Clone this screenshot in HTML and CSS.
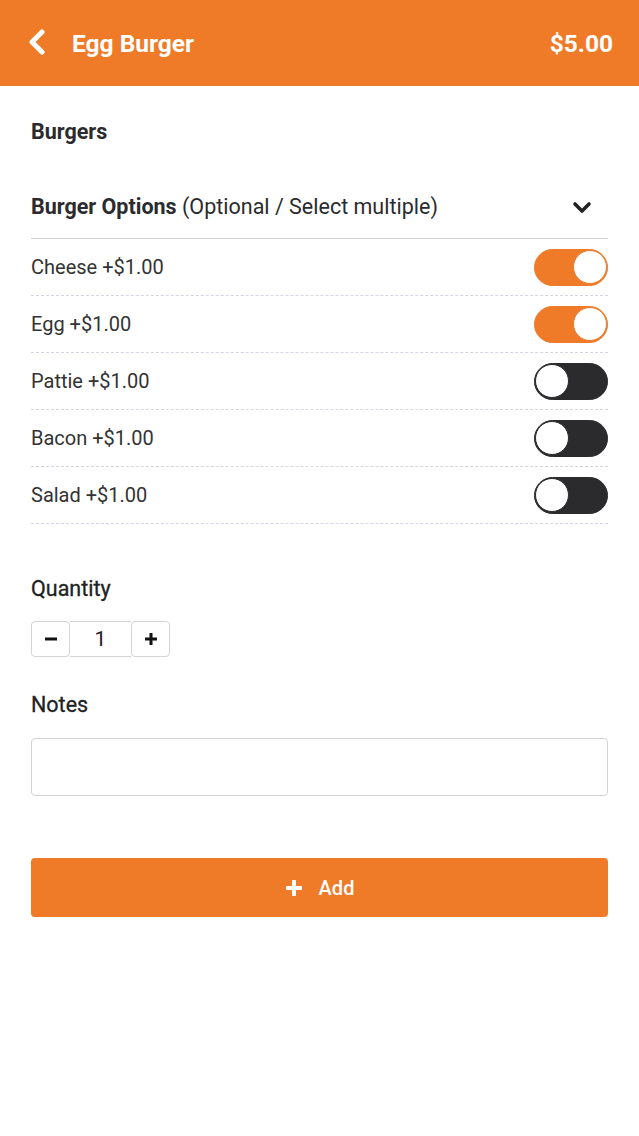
FILE: index.html
```html
<!DOCTYPE html>
<html>
<head>
<meta charset="utf-8">
<link rel="stylesheet" href="styles.css">
</head>
<body>
<header class="topbar">
  <div class="topbar-left">
    <svg class="back" width="20" height="26" viewBox="0 0 20 26"><path d="M16 3 L6 13 L16 23" fill="none" stroke="#fff" stroke-width="5" stroke-linecap="round" stroke-linejoin="round"/></svg>
    <span class="title">Egg Burger</span>
  </div>
  <span class="price">$5.00</span>
</header>
<main class="content">
  <h2 class="category">Burgers</h2>
  <div class="group-head">
    <span><b>Burger Options</b> (Optional / Select multiple)</span>
    <svg class="chev" width="20" height="14" viewBox="0 0 20 14"><path d="M3 3 L10 10 L17 3" fill="none" stroke="#222" stroke-width="3.6" stroke-linecap="round" stroke-linejoin="round"/></svg>
  </div>
  <ul class="options">
    <li class="opt"><span>Cheese +$1.00</span><span class="toggle on"><span class="knob"></span></span></li>
    <li class="opt"><span>Egg +$1.00</span><span class="toggle on"><span class="knob"></span></span></li>
    <li class="opt"><span>Pattie +$1.00</span><span class="toggle"><span class="knob"></span></span></li>
    <li class="opt"><span>Bacon +$1.00</span><span class="toggle"><span class="knob"></span></span></li>
    <li class="opt"><span>Salad +$1.00</span><span class="toggle"><span class="knob"></span></span></li>
  </ul>
  <h3 class="label qty-label">Quantity</h3>
  <div class="stepper">
    <span class="step-btn"><svg width="14" height="14" viewBox="0 0 14 14"><rect x="1" y="5.5" width="12" height="3" fill="#111"/></svg></span>
    <span class="step-val">1</span>
    <span class="step-btn"><svg width="14" height="14" viewBox="0 0 14 14"><rect x="1" y="5.5" width="12" height="3" fill="#111"/><rect x="5.5" y="1" width="3" height="12" fill="#111"/></svg></span>
  </div>
  <h3 class="label notes-label">Notes</h3>
  <div class="notes"></div>
  <button class="add"><svg width="18" height="18" viewBox="0 0 18 18"><rect x="1" y="7" width="16" height="4" rx="1" fill="#fff"/><rect x="7" y="1" width="4" height="16" rx="1" fill="#fff"/></svg><span>Add</span></button>
</main>
</body>
</html>
```

FILE: styles.css
```css
* { box-sizing: border-box; }
body {
  margin: 0;
  font-family: Roboto, "Noto Sans", sans-serif;
  background: #fff;
  color: #2b2b2b;
}
.topbar {
  height: 86px;
  background: #ef7b29;
  display: flex;
  align-items: center;
  justify-content: space-between;
  padding: 0 26px 0 26px;
  color: #fff;
}
.topbar-left { display: flex; align-items: center; }
.back { margin-right: 26px; margin-top: -2px; }
.title { font-size: 24.5px; font-weight: 700; }
.price { font-size: 24.5px; font-weight: 700; }
.content { padding: 0 31px; }
.category {
  margin: 0;
  padding-top: 33px;
  font-size: 21.5px;
  font-weight: 700;
  line-height: 26px;
  color: #2b2b2e;
}
.group-head {
  margin-top: 49px;
  height: 45px;
  display: flex;
  align-items: flex-start;
  justify-content: space-between;
  border-bottom: 1.5px solid #cfcfcf;
  font-size: 21.5px;
  line-height: 26px;
  color: #2b2b2e;
}
.group-head b { font-weight: 700; }
.chev { margin-right: 16px; margin-top: 7px; }
.options { list-style: none; margin: 0; padding: 0; }
.opt {
  height: 57px;
  display: flex;
  align-items: center;
  justify-content: space-between;
  border-bottom: 1px dashed #d9d3e2;
  font-size: 20px;
  color: #333;
}
.toggle {
  width: 74px;
  height: 37px;
  border-radius: 19px;
  background: #2b2b2e;
  border: 1.5px solid #2b2b2e;
  display: flex;
  align-items: center;
  justify-content: flex-start;
}
.toggle.on {
  background: #ef7b29;
  border-color: #ef7b29;
  justify-content: flex-end;
}
.knob {
  width: 34px;
  height: 34px;
  border-radius: 50%;
  background: #fff;
  border: 1.5px solid #2b2b2e;
}
.toggle.on .knob { border-color: #ef7b29; }
.label {
  margin: 0;
  font-size: 21.5px;
  font-weight: 400;
  line-height: 26px;
  color: #222;
  -webkit-text-stroke: 0.3px #222;
}
.qty-label { margin-top: 52px; }
.stepper {
  margin-top: 19px;
  display: flex;
  width: 139px;
  height: 36px;
}
.step-btn {
  width: 39px;
  border: 1.5px solid #d4d4d4;
  border-radius: 4px;
  display: flex;
  align-items: center;
  justify-content: center;
}
.step-val {
  flex: 1;
  border-top: 1.5px solid #d4d4d4;
  border-bottom: 1.5px solid #d4d4d4;
  display: flex;
  align-items: center;
  justify-content: center;
  font-size: 21px;
  color: #222;
}
.notes-label { margin-top: 35px; }
.notes {
  margin-top: 20px;
  height: 58px;
  border: 1.5px solid #d4d4d4;
  border-radius: 4px;
}
.add {
  margin-top: 62px;
  width: 100%;
  height: 59px;
  border: none;
  border-radius: 4px;
  background: #ef7b29;
  color: #fff;
  display: flex;
  align-items: center;
  justify-content: center;
  gap: 16px;
  font-family: Roboto, "Noto Sans", sans-serif;
  font-size: 20px;
  font-weight: 500;
}
```
